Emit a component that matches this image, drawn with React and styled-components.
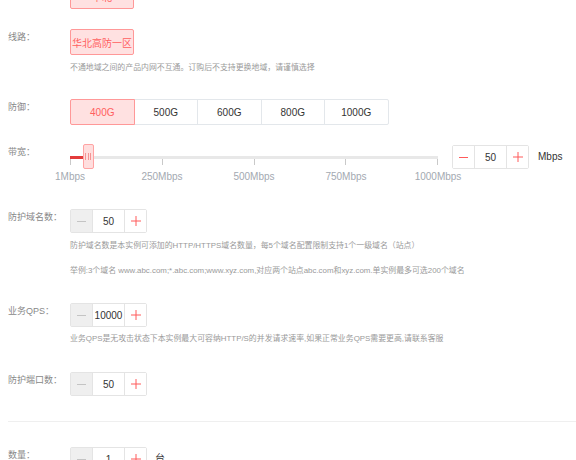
import React from "react";
import styled, { createGlobalStyle } from "styled-components";

const Global = createGlobalStyle`
  html, body { margin: 0; padding: 0; background: #fff; }
  body {
    font-family: "Liberation Sans", "Noto Sans CJK SC", sans-serif;
    overflow: hidden;
  }
`;

const Page = styled.div`
  display: flex;
  flex-direction: column;
  padding-left: 8px;
  margin-top: -17px;
`;

const Row = styled.div`
  display: grid;
  grid-template-columns: 62px 1fr;
  align-items: start;
  margin-top: ${(p) => p.$gap || 0}px;
`;

const Label = styled.div`
  font-size: 9px;
  line-height: 16px;
  color: #888;
  white-space: nowrap;
`;

const Content = styled.div`
  display: flex;
  flex-direction: column;
  align-items: flex-start;
`;

const Inline = styled.div`
  display: flex;
  align-items: flex-start;
`;

const Chip = styled.div`
  width: 64px;
  height: 26px;
  box-sizing: border-box;
  display: flex;
  align-items: center;
  justify-content: center;
  border: 1px solid #ff9898;
  background: #ffe1e1;
  color: #ff5f5f;
  border-radius: 2px;
  font-size: 10px;
`;

const Hint = styled.div`
  font-size: 7.9px;
  line-height: 12px;
  color: #9a9a9a;
  white-space: nowrap;
  margin-top: ${(p) => p.$mt || 0}px;
`;

const Options = styled.div`
  display: flex;
`;

const Option = styled.div`
  position: relative;
  z-index: ${(p) => (p.$active ? 1 : 0)};
  width: 64.5px;
  height: 26px;
  box-sizing: border-box;
  margin-left: -1px;
  display: flex;
  align-items: center;
  justify-content: center;
  font-size: 10px;
  border: 1px solid ${(p) => (p.$active ? "#ff9898" : "#e3e7eb")};
  background: ${(p) => (p.$active ? "#ffe1e1" : "#fff")};
  color: ${(p) => (p.$active ? "#ff5f5f" : "#333")};
  &:first-child { margin-left: 0; border-radius: 2px 0 0 2px; }
  &:last-child { border-radius: 0 2px 2px 0; }
`;

const SliderBox = styled.div`
  width: 368px;
  display: flex;
  flex-direction: column;
`;

const TrackArea = styled.div`
  position: relative;
  height: 25px;
  padding-top: 12px;
  box-sizing: border-box;
`;

const Track = styled.div`
  height: 3px;
  background: #e8e8e8;
`;

const Ticks = styled.div`
  display: flex;
  justify-content: space-between;
  height: 6px;
`;

const Tick = styled.div`
  width: 1px;
  background: #c9c9c9;
`;

const Fill = styled.div`
  position: absolute;
  left: 0;
  top: 12px;
  height: 3px;
  background: #e33b3b;
`;

const Thumb = styled.div`
  position: absolute;
  top: 0;
  width: 11px;
  height: 25px;
  box-sizing: border-box;
  border: 1px solid #ffa3a3;
  background: #ffdede;
  border-radius: 2px;
  display: flex;
  align-items: center;
  justify-content: center;
  gap: 1.5px;
`;

const Grip = styled.div`
  width: 1px;
  height: 7px;
  background: #f39494;
`;

const TickLabels = styled.div`
  display: flex;
  justify-content: space-between;
  margin-top: 2px;
`;

const TickLabel = styled.div`
  width: 0;
  display: flex;
  justify-content: center;
  white-space: nowrap;
  font-size: 10px;
  line-height: 12px;
  color: #a3a9b1;
`;

const Stepper = styled.div`
  display: flex;
  height: 24px;
  box-sizing: border-box;
  border: 1px solid #e4e4e4;
  border-radius: 2px;
  background: #fff;
  margin-left: ${(p) => p.$ml || 0}px;
  margin-top: ${(p) => p.$mt || 0}px;
`;

const StepBtn = styled.div`
  width: 21px;
  display: flex;
  align-items: center;
  justify-content: center;
  background: ${(p) => (p.$disabled ? "#efefef" : "#fff")};
`;

const StepValue = styled.div`
  width: 31px;
  display: flex;
  align-items: center;
  justify-content: center;
  border-left: 1px solid #e4e4e4;
  border-right: 1px solid #e4e4e4;
  font-size: 10px;
  color: #333;
`;

const Unit = styled.div`
  font-size: 10px;
  line-height: 24px;
  color: #333;
  margin-left: ${(p) => p.$ml || 0}px;
  margin-top: ${(p) => p.$mt || 0}px;
`;

const Divider = styled.div`
  height: 1px;
  background: #efefef;
  margin-top: 25px;
`;

const MinusIcon = ({ color }) => (
  <svg width="9" height="9" viewBox="0 0 9 9">
    <line x1="0" y1="4.5" x2="9" y2="4.5" stroke={color} strokeWidth="1" />
  </svg>
);

const PlusIcon = ({ color }) => (
  <svg width="10" height="10" viewBox="0 0 10 10">
    <line x1="0" y1="5" x2="10" y2="5" stroke={color} strokeWidth="1" />
    <line x1="5" y1="0" x2="5" y2="10" stroke={color} strokeWidth="1" />
  </svg>
);

const NumberStepper = ({ value, minDisabled = true, ml, mt }) => (
  <Stepper $ml={ml} $mt={mt}>
    <StepBtn $disabled={minDisabled}>
      <MinusIcon color={minDisabled ? "#c4c4c4" : "#ff5a5a"} />
    </StepBtn>
    <StepValue>{value}</StepValue>
    <StepBtn>
      <PlusIcon color="#ff5a5a" />
    </StepBtn>
  </Stepper>
);

const defenses = ["400G", "500G", "600G", "800G", "1000G"];
const ticks = ["1Mbps", "250Mbps", "500Mbps", "750Mbps", "1000Mbps"];

export default function App() {
  const min = 1;
  const max = 1000;
  const bw = 50;
  const trackW = 368;
  const pos = (trackW * (bw - min)) / (max - min);

  return (
    <>
      <Global />
      <Page>
        <Row>
          <Label>地域：</Label>
          <Content>
            <Chip>华北</Chip>
          </Content>
        </Row>

        <Row $gap={20}>
          <Label>线路：</Label>
          <Content>
            <Chip>华北高防一区</Chip>
            <Hint $mt={7}>不通地域之间的产品内网不互通。订购后不支持更换地域，请谨慎选择</Hint>
          </Content>
        </Row>

        <Row $gap={25}>
          <Label>防御：</Label>
          <Content>
            <Options>
              {defenses.map((d, i) => (
                <Option key={d} $active={i === 0}>{d}</Option>
              ))}
            </Options>
          </Content>
        </Row>

        <Row $gap={19}>
          <Label>带宽：</Label>
          <Inline>
            <SliderBox>
              <TrackArea>
                <Track />
                <Ticks>
                  {ticks.map((t) => (
                    <Tick key={t} />
                  ))}
                </Ticks>
                <Fill style={{ width: `${pos}px` }} />
                <Thumb style={{ left: `${pos - 5.5}px` }}>
                  <Grip />
                  <Grip />
                  <Grip />
                </Thumb>
              </TrackArea>
              <TickLabels>
                {ticks.map((t) => (
                  <TickLabel key={t}>{t}</TickLabel>
                ))}
              </TickLabels>
            </SliderBox>
            <NumberStepper value={bw} minDisabled={false} ml={14} mt={1} />
            <Unit $ml={9} $mt={1}>Mbps</Unit>
          </Inline>
        </Row>

        <Row $gap={26}>
          <Label>防护域名数：</Label>
          <Content>
            <NumberStepper value={50} />
            <Hint $mt={7}>防护域名数是本实例可添加的HTTP/HTTPS域名数量，每5个域名配置限制支持1个一级域名（站点）</Hint>
            <Hint $mt={13}>举例:3个域名 www.abc.com;*.abc.com;www.xyz.com,对应两个站点abc.com和xyz.com.单实例最多可选200个域名</Hint>
          </Content>
        </Row>

        <Row $gap={26}>
          <Label>业务QPS：</Label>
          <Content>
            <NumberStepper value={10000} />
            <Hint $mt={6}>业务QPS是无攻击状态下本实例最大可容纳HTTP/S的并发请求速率,如果正常业务QPS需要更高,请联系客服</Hint>
          </Content>
        </Row>

        <Row $gap={27}>
          <Label>防护端口数：</Label>
          <Content>
            <NumberStepper value={50} />
          </Content>
        </Row>

        <Divider />

        <Row $gap={25}>
          <Label>数量：</Label>
          <Inline>
            <NumberStepper value={1} />
            <Unit $ml={8}>台</Unit>
          </Inline>
        </Row>
      </Page>
    </>
  );
}
